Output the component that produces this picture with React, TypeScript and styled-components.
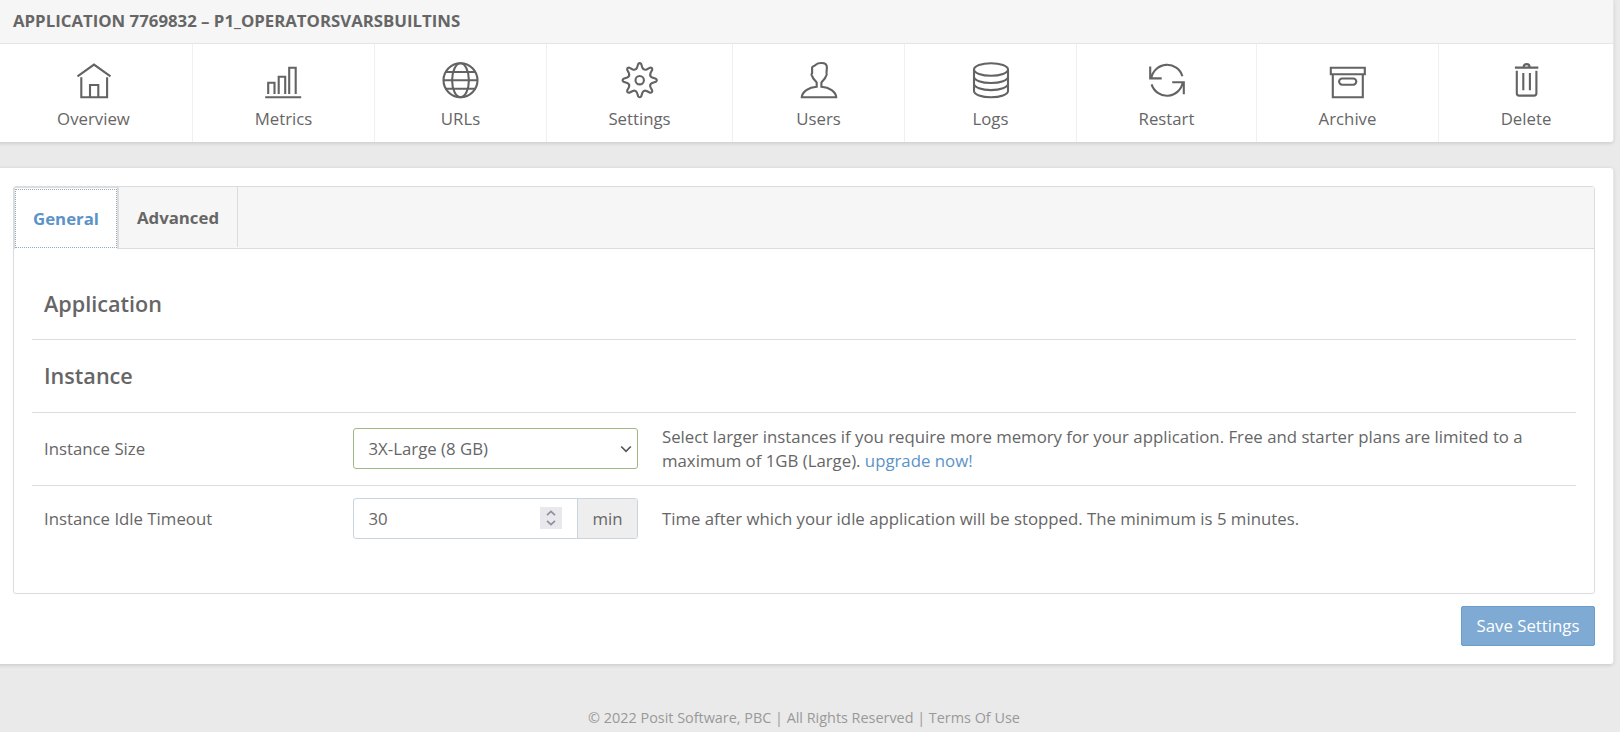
import React from "react";
import styled, { createGlobalStyle } from "styled-components";

const GlobalStyle = createGlobalStyle`
  *, *::before, *::after { box-sizing: border-box; }
  html, body { margin: 0; padding: 0; }
  body {
    background: #eaeaea;
    color: #666;
    font-family: "Open Sans", sans-serif;
    font-size: 16.8px;
    line-height: 24px;
    overflow: hidden;
  }
`;

const Page = styled.div`
  width: 1618px;
  height: 732px;
  margin-left: -5px;
  display: flex;
  flex-direction: column;
`;

const Card = styled.section`
  border-radius: 0 0 3px 3px;
  background: #fff;
  box-shadow: 1px 0 0 #e6e6e6, 0 1px 4px rgba(0, 0, 0, 0.16);
`;

const TitleBar = styled.header`
  height: 44px;
  padding: 9px 18px 0;
  background: #f6f6f6;
  border-bottom: 1px solid #e5e5e5;
`;

const Title = styled.h1`
  margin: 0;
  font-size: 16.8px;
  line-height: 24px;
  font-weight: 700;
  text-transform: uppercase;
`;

const Nav = styled.nav`
  display: grid;
  grid-template-columns: 198px 182px 172px 186px 172px 172px 180px 182px 1fr;
  height: 98px;
`;

const NavItem = styled.a`
  display: flex;
  flex-direction: column;
  align-items: center;
  padding-top: 18px;
  border-right: 1px solid #f0f0f0;
  &:last-child { border-right: 0; }
`;

const NavLabel = styled.span`
  margin-top: 9px;
`;

const Icon = styled.svg`
  width: 36px;
  height: 36px;
  fill: none;
  stroke: #636363;
  stroke-width: 2.1;
  overflow: visible;
`;

const SettingsCard = styled(Card)`
  margin-top: 26px;
  height: 496px;
  padding: 18px 18px 0;
  border-radius: 3px;
`;

const TabBox = styled.div`
  height: 408px;
  border: 1px solid #dcdcdc;
  border-radius: 3px;
`;

const TabBar = styled.div`
  display: flex;
  height: 62px;
  background: #f6f6f6;
  border-bottom: 1px solid #dcdcdc;
`;

const Tab = styled.button<{ $active?: boolean }>`
  display: flex;
  height: ${(p) => (p.$active ? 62 : 60)}px;
  width: ${(p) => (p.$active ? 105 : 119)}px;
  padding: 1px 0;
  border: 0 solid #dcdcdc;
  border-width: ${(p) => (p.$active ? "1px 2px 0 1px" : "0 1px 0 0")};
  background: ${(p) => (p.$active ? "#fff" : "transparent")};
  color: ${(p) => (p.$active ? "#5b93c7" : "#666")};
  font: 700 16.8px/24px "Open Sans", sans-serif;
`;

const TabLabel = styled.span<{ $focused?: boolean }>`
  flex: 1;
  align-self: stretch;
  display: flex;
  align-items: center;
  justify-content: center;
  border: ${(p) => (p.$focused ? "1px dotted #8fabc4" : "0")};
  padding-top: ${(p) => (p.$focused ? 0 : 1)}px;
`;

const Panel = styled.div`
  padding: 18px 18px 0;
`;

const SectionTitle = styled.h2<{ $first?: boolean }>`
  display: flex;
  align-items: center;
  height: 73px;
  margin: 0;
  padding: ${(p) => (p.$first ? 2 : 0)}px 12px 0;
  border-bottom: 1px solid #dcdcdc;
  font-size: 21.6px;
  font-weight: 600;
`;

const Row = styled.div<{ $last?: boolean }>`
  display: grid;
  grid-template-columns: 309px 285px 1fr;
  align-items: center;
  height: ${(p) => (p.$last ? 65 : 73)}px;
  padding: 0 12px ${(p) => (p.$last ? 0 : 1)}px;
  border-bottom: ${(p) => (p.$last ? "0" : "1px solid #dcdcdc")};
`;

const SelectBox = styled.div`
  display: flex;
  align-items: center;
  justify-content: space-between;
  height: 41px;
  padding: 0 5px 0 14.5px;
  border: 1px solid #9dba85;
  border-radius: 3px;
`;

const Chevron = styled.svg`
  width: 12px;
  height: 8px;
  fill: none;
  stroke: #55555c;
  stroke-width: 1.7;
`;

const NumberGroup = styled.div`
  display: flex;
  height: 41px;
  border: 1px solid #c8d5de;
  border-radius: 3px;
  overflow: hidden;
`;

const NumberField = styled.div`
  flex: 1;
  display: flex;
  align-items: center;
  justify-content: space-between;
  padding: 0 15px 0 14.5px;
`;

const Spinner = styled.svg`
  width: 22px;
  height: 22px;
  margin-bottom: 1px;
  background: #e9e9ed;
  fill: none;
  stroke: #8f8f9d;
  stroke-width: 1.7;
`;

const Unit = styled.span`
  display: flex;
  align-items: center;
  justify-content: center;
  width: 60px;
  background: #eee;
  border-left: 1px solid #c8d5de;
`;

const Help = styled.p`
  margin: 0;
  padding-left: 24px;
`;

const Link = styled.a`
  color: #5b93c7;
`;

const Actions = styled.div`
  display: flex;
  justify-content: flex-end;
  margin-top: 12px;
`;

const SaveButton = styled.button`
  width: 134px;
  height: 40px;
  padding: 0;
  border: 1px solid #6b9dcc;
  border-radius: 2px;
  background: #7eaad3;
  color: #fff;
  font: 400 16.8px/24px "Open Sans", sans-serif;
`;

const Footer = styled.footer`
  margin-top: 42px;
  text-align: center;
  font-size: 14.4px;
  color: #999;
`;

const gearPath = (() => {
  const at = (r: number, side: number, deg: number) => {
    const a = (deg * Math.PI) / 180;
    const x = 18 + r * Math.cos(a) - side * Math.sin(a);
    const y = 18 + r * Math.sin(a) + side * Math.cos(a);
    return `${x.toFixed(2)} ${y.toFixed(2)}`;
  };
  let d = "";
  for (let i = 0; i < 8; i++) {
    const deg = i * 45;
    d += `${i ? "L" : "M"}${at(12.5, -2.7, deg)}L${at(16.2, -1.5, deg)}Q${at(18, 0, deg)} ${at(16.2, 1.5, deg)}L${at(12.5, 2.7, deg)}Q${at(10.4, 0, deg + 22.5)} ${at(12.5, -2.7, deg + 45)}`;
  }
  return d + "Z";
})();

const items: { label: string; icon: React.ReactNode }[] = [
  {
    label: "Overview",
    icon: <path d="M1.5 14.4 18 2.6l16.5 11.8M5.3 15.2v20h25.8v-20M14 35.2V23h8.3v12.2" />,
  },
  {
    label: "Metrics",
    icon: <path d="M-.8 35.2h36M2.2 32V20.7h6.3V32M12.7 32V14.7h6.5V32M23.2 32V5.8h6.5V32" />,
  },
  {
    label: "URLs",
    icon: (
      <g transform="translate(-.5 .2)">
        <circle cx="18" cy="18" r="17" />
        <ellipse cx="18" cy="18" rx="8.4" ry="17" />
        <path d="M3 9.8h30M1 18h34M3 26.5h30" />
      </g>
    ),
  },
  {
    label: "Settings",
    icon: (
      <g transform="translate(-.3 .2)">
        <path d={gearPath} strokeLinejoin="round" />
        <circle cx="18" cy="18" r="4.2" />
      </g>
    ),
  },
  {
    label: "Users",
    icon: (
      <path d="M15.700 24.700V20.700C14.800 18.600 11.800 17.200 11.300 14.300C10.300 13.600 10.300 12 11.100 11.300V5.600C11.100 4 13.400 4.600 14.800 2.700C16.200 1.200 19 1 20.500 1C23.800 1 25.900 2.200 25.900 5.400L25.500 10.800C26 12.400 25.600 13.700 24.900 14.300C24.300 17.200 21.300 18.600 20.400 20.700V24.700C28.500 25.200 34.800 30 35.200 35.200H.8C1.200 30 7.600 25.200 15.700 24.700Z" />
    ),
  },
  {
    label: "Logs",
    icon: (
      <g transform="translate(0 .2)">
        <ellipse cx="18" cy="7.3" rx="17" ry="6.3" />
        <path d="M1 7.3v21.5C1 32.3 8.6 35 18 35s17-2.7 17-6.2V7.3M1 14.5c0 3.5 7.6 6.3 17 6.3s17-2.8 17-6.3M1 21.6c0 3.5 7.6 6.3 17 6.3s17-2.8 17-6.3" />
      </g>
    ),
  },
  {
    label: "Restart",
    icon: (
      <path
        transform="translate(0 .2)"
        d="M1.2 4.2V16.2H12.7M2.3 16A16 16 0 0 1 33.4 14M34.8 32V20H23.2M33.7 20.2A16 16 0 0 1 2.6 22.2"
      />
    ),
  },
  {
    label: "Archive",
    icon: (
      <g transform="translate(-.2 .2)">
        <path d="M1 5.5h34v6.5H1zM3 12v23h30V12" />
        <rect x="9.3" y="16.3" width="17.2" height="6.2" rx="3.1" />
      </g>
    ),
  },
  {
    label: "Delete",
    icon: (
      <path
        transform="translate(.6 .2)"
        d="M6.3 5.4h23.4M15 5C15 .9 21 .9 21 5M8.2 8.5V31q0 2.4 2.4 2.4h14.8q2.4 0 2.4-2.4V8.5M14.7 10.7V28M21.3 10.7V28"
      />
    ),
  },
];

export default function App() {
  return (
    <>
      <GlobalStyle />
      <Page>
        <Card>
          <TitleBar>
            <Title>Application 7769832 – P1_OperatorsVarsBuiltins</Title>
          </TitleBar>
          <Nav>
            {items.map((item) => (
              <NavItem key={item.label}>
                <Icon viewBox="0 0 36 36">{item.icon}</Icon>
                <NavLabel>{item.label}</NavLabel>
              </NavItem>
            ))}
          </Nav>
        </Card>
        <SettingsCard>
          <TabBox>
            <TabBar>
              <Tab $active>
                <TabLabel $focused>General</TabLabel>
              </Tab>
              <Tab>
                <TabLabel>Advanced</TabLabel>
              </Tab>
            </TabBar>
            <Panel>
              <SectionTitle $first>Application</SectionTitle>
              <SectionTitle>Instance</SectionTitle>
              <Row>
                <span>Instance Size</span>
                <SelectBox>
                  <span>3X-Large (8 GB)</span>
                  <Chevron viewBox="0 0 12 8">
                    <path d="M1.2 1.5 6 6.300l4.800-4.800" />
                  </Chevron>
                </SelectBox>
                <Help>
                  Select larger instances if you require more memory for your application. Free and
                  starter plans are limited to a maximum of 1GB (Large). <Link>upgrade now!</Link>
                </Help>
              </Row>
              <Row $last>
                <span>Instance Idle Timeout</span>
                <NumberGroup>
                  <NumberField>
                    <span>30</span>
                    <Spinner viewBox="0 0 22 22">
                      <path d="M7 8.200l4-3.800 4 3.800M7 13.800l4 3.800 4-3.800" />
                    </Spinner>
                  </NumberField>
                  <Unit>min</Unit>
                </NumberGroup>
                <Help>
                  Time after which your idle application will be stopped. The minimum is 5 minutes.
                </Help>
              </Row>
            </Panel>
          </TabBox>
          <Actions>
            <SaveButton>Save Settings</SaveButton>
          </Actions>
        </SettingsCard>
        <Footer>© 2022 Posit Software, PBC | All Rights Reserved | Terms Of Use</Footer>
      </Page>
    </>
  );
}
